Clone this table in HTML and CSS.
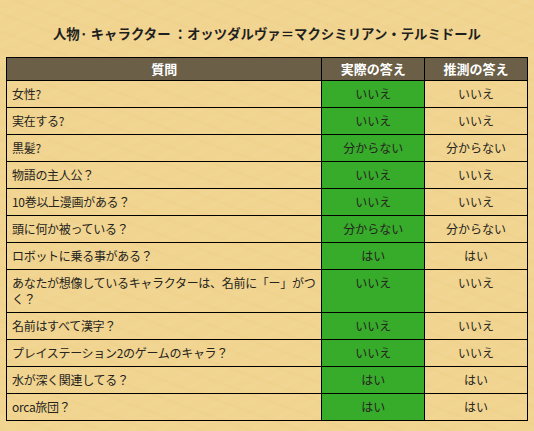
FILE: index.html
```html
<!DOCTYPE html>
<html lang="ja">
<head>
<meta charset="utf-8">
<link rel="stylesheet" href="styles.css">
</head>
<body>
<div class="page">
  <h1 class="title">人物· キャラクター ：オッツダルヴァ＝マクシミリアン・テルミドール</h1>
  <table class="answers">
    <thead>
      <tr><th class="q">質問</th><th class="a">実際の答え</th><th class="a">推測の答え</th></tr>
    </thead>
    <tbody>
      <tr><td class="q">女性?</td><td class="real">いいえ</td><td class="guess">いいえ</td></tr>
      <tr><td class="q">実在する?</td><td class="real">いいえ</td><td class="guess">いいえ</td></tr>
      <tr><td class="q">黒髪?</td><td class="real">分からない</td><td class="guess">分からない</td></tr>
      <tr><td class="q">物語の主人公？</td><td class="real">いいえ</td><td class="guess">いいえ</td></tr>
      <tr><td class="q">10巻以上漫画がある？</td><td class="real">いいえ</td><td class="guess">いいえ</td></tr>
      <tr><td class="q">頭に何か被っている？</td><td class="real">分からない</td><td class="guess">分からない</td></tr>
      <tr><td class="q">ロボットに乗る事がある？</td><td class="real">はい</td><td class="guess">はい</td></tr>
      <tr><td class="q">あなたが想像しているキャラクターは、名前に「ー」がつく？</td><td class="real">いいえ</td><td class="guess">いいえ</td></tr>
      <tr><td class="q">名前はすべて漢字？</td><td class="real">いいえ</td><td class="guess">いいえ</td></tr>
      <tr><td class="q">プレイステーション2のゲームのキャラ？</td><td class="real">いいえ</td><td class="guess">いいえ</td></tr>
      <tr><td class="q">水が深く関連してる？</td><td class="real">はい</td><td class="guess">はい</td></tr>
      <tr><td class="q">orca旅団？</td><td class="real">はい</td><td class="guess">はい</td></tr>
    </tbody>
  </table>
</div>
</body>
</html>
```
FILE: styles.css
```css
html, body {
  margin: 0;
  padding: 0;
}
body {
  background-color: #f1d48f;
  background-image:
    repeating-linear-gradient(155deg, rgba(255,255,255,0.03) 0 4px, rgba(0,0,0,0) 4px 13px),
    repeating-linear-gradient(20deg, rgba(170,130,50,0.025) 0 3px, rgba(0,0,0,0) 3px 17px);
  font-family: "Noto Sans CJK JP", "Noto Sans", sans-serif;
  color: #262420;
  width: 534px;
  height: 431px;
  overflow: hidden;
}
.page {
  padding: 24px 6px 0 6px;
}
.title {
  margin: 0 0 15px 0;
  font-size: 13.4px;
  line-height: 18px;
  font-weight: bold;
  text-align: center;
  color: #1f1f1f;
}
.answers {
  width: 522px;
  border-collapse: collapse;
  border: 1px solid #000;
  font-size: 12px;
}
.answers th {
  background: #6b5f48;
  color: #fff;
  font-weight: bold;
  font-size: 13px;
  height: 22px;
  padding: 0;
  line-height: 16px;
  border: 1px solid #000;
  text-align: center;
}
.answers th.q {
  width: 315px;
}
.answers th.a {
  width: 102px;
}
.answers td {
  border: 1px solid #000;
  padding: 5px 5px 5px 5px;
  line-height: 16px;
  vertical-align: top;
}
.answers td.q {
  padding-right: 2px;
  letter-spacing: -0.3px;
}
.answers td.real {
  background: #37ab2a;
  text-align: center;
}
.answers td.guess {
  text-align: center;
}
```
